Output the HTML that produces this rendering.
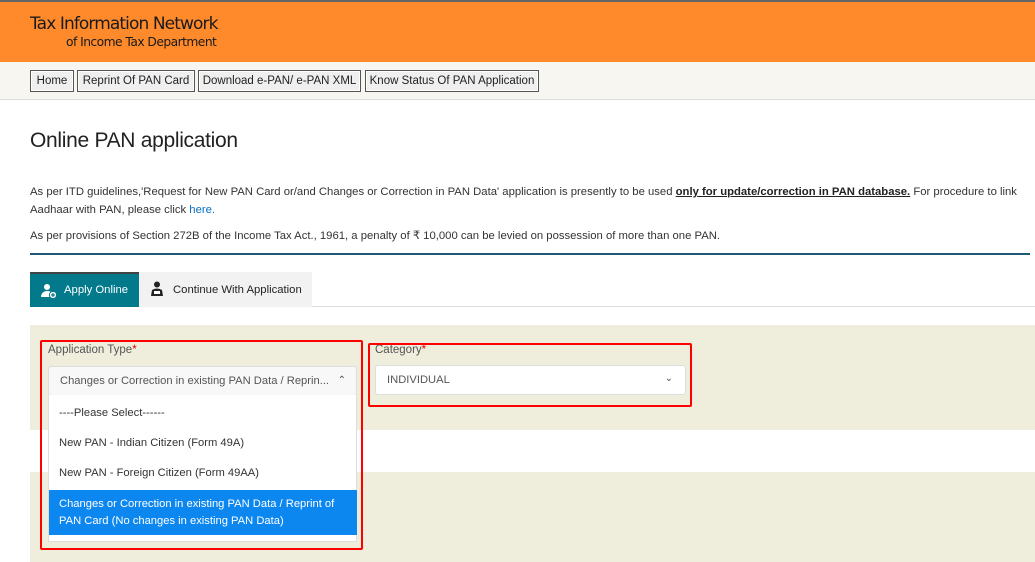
<!DOCTYPE html>
<html><head><meta charset="utf-8"><style>
*{box-sizing:border-box;margin:0;padding:0}
body{width:1035px;height:562px;overflow:hidden;background:#fff;font-family:"Liberation Sans",sans-serif;color:#333;position:relative}
.hdr{position:absolute;left:0;top:0;width:1035px;height:62px;background:#ff8a2b;border-top:2px solid #666}
.t1{position:absolute;left:30px;top:12px;font-size:17px;color:#1a1a1a;font-family:"DejaVu Sans","Liberation Sans",sans-serif;letter-spacing:-0.9px}
.t2{position:absolute;left:66px;top:33px;font-size:12.3px;color:#1a1a1a;font-family:"DejaVu Sans","Liberation Sans",sans-serif;letter-spacing:-0.55px}
.nav{position:absolute;left:0;top:62px;width:1035px;height:38px;background:#f7f6f0;border-bottom:1px solid #ddd}
.nav span{position:absolute;top:8px;height:22px;border:1px solid #555;background:#efefef;font-size:11.5px;line-height:20px;text-align:center;color:#222;box-shadow:inset 0 0 0 1px #fff;white-space:nowrap}
h1{position:absolute;left:30px;top:129px;font-size:21px;font-weight:normal;color:#222;letter-spacing:-0.3px}
.p{position:absolute;left:30px;font-size:11.3px;color:#333;line-height:18px;width:1000px}
.p a{color:#0b6fc0;text-decoration:none}
.hr{position:absolute;left:30px;top:253px;width:1000px;height:2px;background:#1d5b73}
.tabline{position:absolute;left:30px;top:306px;width:1005px;height:1px;background:#ddd}
.tab1{position:absolute;left:30px;top:272px;width:109px;height:35px;background:#027a8c;border-top:2px solid #444;color:#fff;font-size:11.3px;line-height:33px;padding-left:34px}
.tab2{position:absolute;left:139px;top:272px;width:173px;height:35px;background:#f2f2f2;color:#222;font-size:11.3px;line-height:36px;padding-left:34px}
.bg1{position:absolute;left:30px;top:325px;width:1005px;height:105px;background:#efeddc}
.bg2{position:absolute;left:30px;top:472px;width:1005px;height:90px;background:#efeddc}
.red{position:absolute;border:2px solid #f00;border-radius:2px}
.lbl{position:absolute;font-size:11.5px;color:#555}
.lbl b{color:#d00;font-weight:normal}
.sel{position:absolute;background:#fff;border:1px solid #ddd;border-radius:3px;font-size:11.2px;color:#555;padding-left:11px;line-height:28px}
.dd{position:absolute;left:48px;top:395px;width:309px;height:147px;background:#fff;border:1px solid #ddd;border-top:none;font-size:11.2px;color:#333}
.dd div{position:absolute;left:10px}
.hl{position:absolute;left:0!important;top:95px;width:308px;height:45px;background:#0d87f0;color:#fff;padding:6px 10px;line-height:17px}
</style></head><body>
<div class="hdr"><div class="t1">Tax Information Network</div><div class="t2">of Income Tax Department</div></div>
<div class="nav">
<span style="left:30px;width:44px">Home</span>
<span style="left:77px;width:118px">Reprint Of PAN Card</span>
<span style="left:198px;width:163px">Download e-PAN/ e-PAN XML</span>
<span style="left:365px;width:174px">Know Status Of PAN Application</span>
</div>
<h1>Online PAN application</h1>
<div class="p" style="top:183px">As per ITD guidelines,'Request for New PAN Card or/and Changes or Correction in PAN Data' application is presently to be used <b style="text-decoration:underline;color:#222">only for update/correction in PAN database.</b> For procedure to link Aadhaar with PAN, please click <a>here.</a></div>
<div class="p" style="top:227px">As per provisions of Section 272B of the Income Tax Act., 1961, a penalty of ₹ 10,000 can be levied on possession of more than one PAN.</div>
<div class="hr"></div>
<div class="tabline"></div>
<div class="tab1"><svg style="position:absolute;left:11px;top:9px" width="16" height="16" viewBox="0 0 16 16"><circle cx="6" cy="4" r="3" fill="#fff"/><path d="M0 14c0-4 3-6 6-6s4 1 5 2v4z" fill="#fff"/><circle cx="12" cy="12" r="3.6" fill="#fff" stroke="#027a8c" stroke-width="1"/><path d="M12 10v4M10 12h4" stroke="#027a8c" stroke-width="1.2"/></svg>Apply Online</div>
<div class="tab2"><svg style="position:absolute;left:10px;top:9px" width="16" height="16" viewBox="0 0 16 16"><circle cx="8" cy="3.5" r="3" fill="#222"/><path d="M2 15l1-6q5-3 10 0l1 6z" fill="#222"/><rect x="5" y="10" width="6" height="3" fill="#fff"/></svg>Continue With Application</div>
<div class="bg1"></div><div class="bg2"></div>
<div class="lbl" style="left:48px;top:344px">Application Type<b>*</b></div>
<div class="sel" style="left:48px;top:366px;width:309px;height:30px;background:#f8f8f8">Changes or Correction in existing PAN Data / Reprin...<span style="position:absolute;right:10px;top:0;font-size:10px">&#8963;</span></div>
<div class="dd">
<div style="top:12px">----Please Select------</div>
<div style="top:42px">New PAN - Indian Citizen (Form 49A)</div>
<div style="top:72px">New PAN - Foreign Citizen (Form 49AA)</div>
<div class="hl">Changes or Correction in existing PAN Data / Reprint of PAN Card (No changes in existing PAN Data)</div>
</div>
<div class="lbl" style="left:375px;top:344px">Category<b>*</b></div>
<div class="sel" style="left:375px;top:365px;width:311px;height:30px">INDIVIDUAL<span style="position:absolute;right:12px;top:-1px;font-size:10px">&#8964;</span></div>
<div class="red" style="left:40px;top:340px;width:323px;height:210px"></div>
<div class="red" style="left:368px;top:343px;width:324px;height:64px"></div>
</body></html>
